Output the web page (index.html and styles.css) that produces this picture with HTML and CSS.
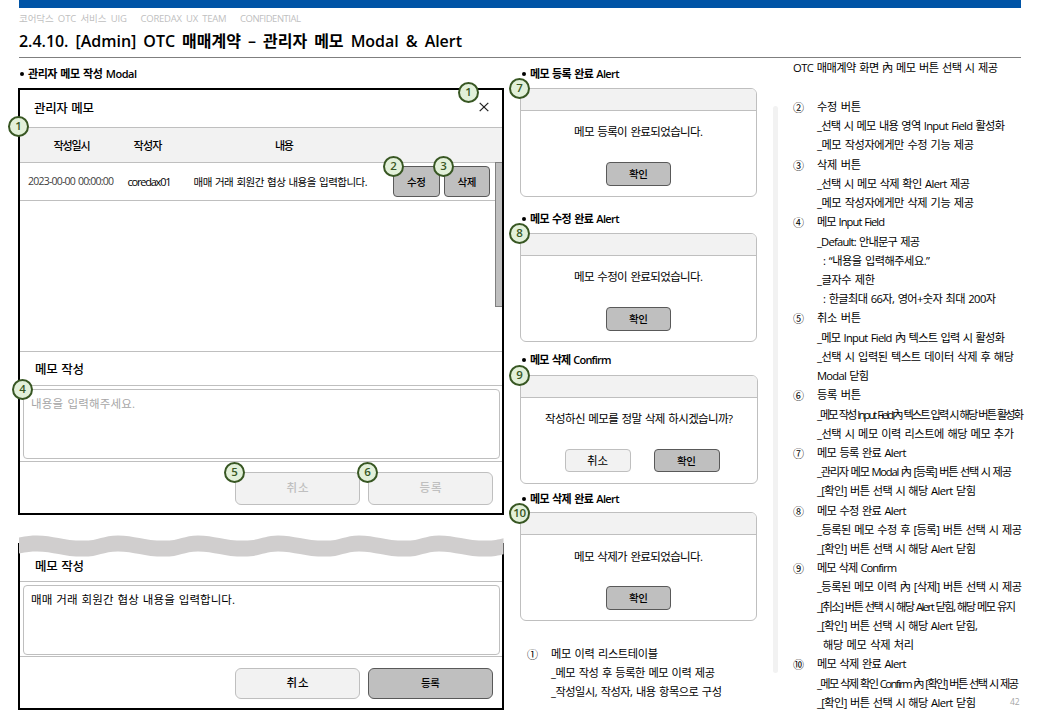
FILE: index.html
```html
<!DOCTYPE html>
<html lang="ko">
<head>
<meta charset="utf-8">
<title>2.4.10. [Admin] OTC 매매계약</title>
<link rel="stylesheet" href="styles.css">
</head>
<body>
<div class="page">
  <header class="head">
    <div class="topbar"></div>
    <div class="caption"><span data-w="107">코어닥스 OTC 서비스 UIG</span><span data-w="85">COREDAX UX TEAM</span><span data-w="60">CONFIDENTIAL</span></div>
    <h1 class="title"><span data-w="442">2.4.10. [Admin] OTC 매매계약 – 관리자 메모 Modal &amp; Alert</span></h1>
  </header>
  <div class="columns">
    <section class="left">
      <h2 class="label"><i class="dot"></i><span data-w="108">관리자 메모 작성 Modal</span></h2>
      <div class="modal">
        <div class="modal-title"><span data-w="59">관리자 메모</span>
          <svg class="close" viewBox="0 0 10 10" width="10" height="10"><path d="M.7 .9 9.3 9.1M9.3 .9 .7 9.1" stroke="#222" stroke-width="1.3" fill="none"/></svg>
        </div>
        <div class="thead"><span data-w="36">작성일시</span><span data-w="28">작성자</span><span data-w="18">내용</span></div>
        <div class="tbody">
          <div class="row">
            <span class="date" data-w="85">2023-00-00 00:00:00</span>
            <span class="author" data-w="43">coredax01</span>
            <span class="memo" data-w="173">매매 거래 회원간 협상 내용을 입력합니다.</span>
            <button class="btn dark edit"><span data-w="18">수정</span></button>
            <button class="btn dark del"><span data-w="18">삭제</span></button>
          </div>
          <div class="scroll"></div>
        </div>
        <div class="write-title"><span data-w="48">메모 작성</span></div>
        <div class="area-wrap"><div class="area hint"><span data-w="103">내용을 입력해주세요.</span></div></div>
        <div class="actions"><button class="btn light off"><span data-w="21">취소</span></button><button class="btn light off"><span data-w="21">등록</span></button></div>
      </div>
      <div class="modal second">
        <svg class="wave" width="485" height="22" viewBox="0 0 485 22">
          <path d="M0 2.5C8 .8 12 .4 18 .4C34 .4 44 5.6 64 5.6C80 5.6 84 .4 99 .4C115 .4 125 5.6 145 5.6C161 5.6 165 .4 179 .4C195 .4 205 5.6 225 5.6C241 5.6 245 .4 259 .4C275 .4 286 5.6 306 5.6C322 5.6 326 .4 340 .4C356 .4 366 5.6 386 5.6C402 5.6 406 .4 420 .4C436 .4 447 5.6 467 5.6C475 5.6 479 4.5 484.500 3.200V19.200C479 20.500 475 21.600 467 21.600C447 21.600 436 16.400 420 16.400C406 16.400 402 21.600 386 21.600C366 21.600 356 16.400 340 16.400C326 16.400 322 21.600 306 21.600C286 21.600 275 16.400 259 16.400C245 16.400 241 21.600 225 21.600C205 21.600 195 16.400 179 16.400C165 16.400 161 21.600 145 21.600C125 21.600 115 16.400 99 16.400C84 16.400 80 21.600 64 21.600C44 21.600 34 16.400 18 16.400C12 16.400 8 16.800 0 18.500Z" fill="#d0cece"/>
        </svg>
        <div class="write-title"><span data-w="48">메모 작성</span></div>
        <div class="area-wrap"><div class="area"><span data-w="203">매매 거래 회원간 협상 내용을 입력합니다.</span></div></div>
        <div class="actions"><button class="btn light"><span data-w="21">취소</span></button><button class="btn dark"><span data-w="18">등록</span></button></div>
      </div>
    </section>

    <section class="mid">
      <h2 class="label"><i class="dot"></i><span data-w="88.5">메모 등록 완료 Alert</span></h2>
      <div class="alert"><div class="alert-head"></div><p><span data-w="128">메모 등록이 완료되었습니다.</span></p><div class="alert-foot"><button class="btn dark"><span data-w="18">확인</span></button></div></div>
      <h2 class="label l2"><i class="dot"></i><span data-w="88.5">메모 수정 완료 Alert</span></h2>
      <div class="alert"><div class="alert-head"></div><p><span data-w="128">메모 수정이 완료되었습니다.</span></p><div class="alert-foot"><button class="btn dark"><span data-w="18">확인</span></button></div></div>
      <h2 class="label l3"><i class="dot"></i><span data-w="80.5">메모 삭제 Confirm</span></h2>
      <div class="alert confirm"><div class="alert-head"></div><p><span data-w="187">작성하신 메모를 정말 삭제 하시겠습니까?</span></p><div class="alert-foot"><button class="btn light"><span data-w="20">취소</span></button><button class="btn dark"><span data-w="18">확인</span></button></div></div>
      <h2 class="label l4"><i class="dot"></i><span data-w="88.5">메모 삭제 완료 Alert</span></h2>
      <div class="alert last"><div class="alert-head"></div><p><span data-w="128">메모 삭제가 완료되었습니다.</span></p><div class="alert-foot"><button class="btn dark"><span data-w="18">확인</span></button></div></div>
      <div class="notes first">
        <b>①</b><span data-w="106">메모 이력 리스트테이블</span>
        <span data-w="163">_메모 작성 후 등록한 메모 이력 제공</span>
        <span data-w="170">_작성일시, 작성자, 내용 항목으로 구성</span>
      </div>
    </section>

    <div class="divider"></div>

    <section class="right">
      <p class="lead"><span data-w="204">OTC 매매계약 화면 內 메모 버튼 선택 시 제공</span></p>
      <div class="notes">
        <b>②</b><span data-w="43">수정 버튼</span>
        <span data-w="187">_선택 시 메모 내용 영역 Input Field 활성화</span>
        <span data-w="156">_메모 작성자에게만 수정 기능 제공</span>
        <b>③</b><span data-w="43">삭제 버튼</span>
        <span data-w="152">_선택 시 메모 삭제 확인 Alert 제공</span>
        <span data-w="156">_메모 작성자에게만 삭제 기능 제공</span>
        <b>④</b><span data-w="67">메모 Input Field</span>
        <span data-w="102">_Default: 안내문구 제공</span>
        <span class="in" data-w="106">: “내용을 입력해주세요.”</span>
        <span data-w="57">_글자수 제한</span>
        <span class="in" data-w="172">: 한글최대 66자, 영어+숫자 최대 200자</span>
        <b>⑤</b><span data-w="43">취소 버튼</span>
        <span data-w="187">_메모 Input Field 內 텍스트 입력 시 활성화</span>
        <span data-w="196">_선택 시 입력된 텍스트 데이터 삭제 후 해당</span>
        <span data-w="51">Modal 닫힘</span>
        <b>⑥</b><span data-w="43">등록 버튼</span>
        <span data-w="206">_메모 작성 Input Field內 텍스트 입력 시 해당 버튼 활성화</span>
        <span data-w="196">_선택 시 메모 이력 리스트에 해당 메모 추가</span>
        <b>⑦</b><span data-w="88.5">메모 등록 완료 Alert</span>
        <span data-w="194">_관리자 메모 Modal 內 [등록] 버튼 선택 시 제공</span>
        <span data-w="158">_[확인] 버튼 선택 시 해당 Alert 닫힘</span>
        <b>⑧</b><span data-w="88.5">메모 수정 완료 Alert</span>
        <span data-w="204">_등록된 메모 수정 후 [등록] 버튼 선택 시 제공</span>
        <span data-w="158">_[확인] 버튼 선택 시 해당 Alert 닫힘</span>
        <b>⑨</b><span data-w="79">메모 삭제 Confirm</span>
        <span data-w="204">_등록된 메모 이력 內 [삭제] 버튼 선택 시 제공</span>
        <span data-w="198">_[취소] 버튼 선택 시 해당 Alert 닫힘, 해당 메모 유지</span>
        <span data-w="160">_[확인] 버튼 선택 시 해당 Alert 닫힘,</span>
        <span class="in" data-w="90">해당 메모 삭제 처리</span>
        <b>⑩</b><span data-w="88.5">메모 삭제 완료 Alert</span>
        <span data-w="201">_메모 삭제 확인 Confirm 內 [확인] 버튼 선택 시 제공</span>
        <span data-w="158">_[확인] 버튼 선택 시 해당 Alert 닫힘</span>
      </div>
    </section>
  </div>
  <i class="badge m1">1</i><i class="badge m1b">1</i><i class="badge m2">2</i><i class="badge m3">3</i><i class="badge m4">4</i>
  <i class="badge m5">5</i><i class="badge m6">6</i><i class="badge m7">7</i><i class="badge m8">8</i><i class="badge m9">9</i><i class="badge m10">10</i>
  <span class="pageno">42</span>
</div>
<script src="fit.js"></script>
</body>
</html>
```
FILE: styles.css
```css
* { box-sizing: border-box; margin: 0; padding: 0; }
body { background: #fff; color: #000; font: 11px "Open Sans", "Noto Sans CJK KR", sans-serif; word-spacing: 1px; }
.page { position: relative; width: 1040px; height: 720px; overflow: hidden; }
[data-w] { display: inline-block; white-space: pre; }

.head { height: 58px; width: 1002px; margin-left: 19px; border-bottom: 1px solid #7f7f7f; }
.topbar { height: 8px; background: #0054a6; }
.caption { display: flex; gap: 13.500px; height: 20px; line-height: 21px; font-size: 9.500px; color: #bfbfbf; word-spacing: 2px; }
.title { font-size: 16px; font-weight: 600; line-height: 26px; height: 26px; word-spacing: 3px; }

.columns { display: flex; height: 662px; padding-left: 18px; }
.left { width: 486px; }
.mid { width: 238px; margin-left: 16px; }
.divider { width: 5px; height: 567px; margin: 48px 0 0 15px; border-radius: 3px; background: #f2f2f2; }
.right { width: 247px; margin-left: 15px; }

.label { display: flex; align-items: center; gap: 4px; height: 30px; padding: 0 0 0 2px; font-size: 11px; font-weight: 600; }
.dot { width: 4px; height: 4px; margin-top: 1px; border-radius: 50%; background: #000; }

.modal { width: 486px; height: 427px; border: 2px solid #000; background: #fff; }
.modal-title { display: flex; justify-content: space-between; align-items: center; height: 38px; padding: 0 13px 3px 14px; font-size: 12.500px; font-weight: 500; border-bottom: 1px solid #bfbfbf; }
.thead { display: grid; grid-template-columns: 104px 48px 225px; align-items: center; justify-items: center; height: 35px; background: #f2f2f2; border-bottom: 1px solid #bfbfbf; font-weight: 500; font-size: 11px; }
.tbody { display: flex; height: 189px; border-bottom: 1px solid #bfbfbf; }
.row { display: flex; align-items: center; width: 475px; height: 38px; padding-left: 8px; border-bottom: 1px solid #bfbfbf; }
.row > span { margin-top: -1px; }
.date { color: #404040; font-size: 10.500px; }
.author { margin-left: 13.500px; }
.memo { margin-left: 22px; font-size: 10.500px; }
.scroll { width: 7px; height: 145px; margin-top: -1px; background: #bfbfbf; border: 1px solid #7f7f7f; border-right: 0; }
.write-title { height: 34px; line-height: 35px; padding-left: 15px; font-size: 12.500px; font-weight: 500; border-bottom: 1px solid #bfbfbf; }
.area-wrap { height: 76px; padding: 3px 2px 0 3px; border-bottom: 1px solid #bfbfbf; }
.area { height: 70px; padding: 3px 7px; line-height: 22px; font-size: 11.500px; border: 1px solid #bfbfbf; border-radius: 4px; }
.hint { color: #a6a6a6; }
.actions { display: flex; justify-content: flex-end; gap: 8px; padding: 10px 9px 0 0; }
.actions .btn { width: 125px; height: 33px; padding-bottom: 2px; border-radius: 6px; }

.btn { display: flex; align-items: center; justify-content: center; padding-bottom: 1px; border-radius: 4px; font: inherit; color: #000; }
.dark { background: #bfbfbf; border: 1px solid #595959; font-size: 10.500px; font-weight: 500; }
.light { background: #f2f2f2; border: 1px solid #bfbfbf; font-size: 11.500px; }
.actions .light { font-weight: 500; padding-bottom: 4px; }
.actions .off { color: #bfbfbf; }
.edit { flex: none; width: 47px; height: 31px; margin-left: auto; }
.del { flex: none; width: 46px; height: 31px; margin: 0 5px 0 4px; }

.second { position: relative; height: 167px; margin-top: 28px; }
.second .write-title { height: 37px; line-height: 43px; }
.second .area-wrap { height: 75px; }
.second .actions { padding-top: 11px; }
.second .actions .btn { height: 31px; }
.wave { position: absolute; left: -1px; top: -10px; }

.alert { width: 237px; height: 109px; border: 1px solid #bfbfbf; border-radius: 6px; overflow: hidden; }
.alert-head { height: 22px; background: #f2f2f2; border-bottom: 1px solid #bfbfbf; }
.alert p { height: 51px; line-height: 42px; text-align: center; font-size: 11.500px; }
.alert-foot { display: flex; justify-content: center; gap: 23px; }
.alert-foot .btn { width: 65px; height: 24px; }
.last p { line-height: 43px; }
.confirm { width: 238px; }
.confirm .alert-foot { padding-left: 6px; }
.confirm .alert-foot .btn { width: 66px; height: 23px; }
.l2 { margin-top: 6px; }
.l3 { margin-top: 1px; height: 32px; }
.l4 { height: 28px; }

.notes { display: grid; grid-template-columns: 24px 1fr; grid-auto-rows: 19.220px; line-height: 19.220px; font-size: 11.200px; }
.notes b { font: 11px/20px "Noto Sans CJK KR", sans-serif; }
.notes span { grid-column: 2; justify-self: start; }
.notes .in { margin-left: 6px; }
.first { margin: 23px 0 0 7px; }
.lead { height: 39px; line-height: 20px; font-size: 11.200px; }

.badge { position: absolute; width: 21px; height: 21px; border: 2px solid #385723; border-radius: 50%; background: #e2f0d9; color: #385723; font: 600 11.500px/16px "Open Sans", sans-serif; text-align: center; }
.m1 { left: 8px; top: 116px; }
.m1b { left: 458px; top: 82px; }
.m2 { left: 383px; top: 156px; }
.m3 { left: 433px; top: 156px; }
.m4 { left: 12px; top: 379px; }
.m5 { left: 224px; top: 462px; }
.m6 { left: 357px; top: 462px; }
.m7 { left: 509px; top: 78px; }
.m8 { left: 509px; top: 223px; }
.m9 { left: 509px; top: 365px; }
.m10 { left: 509px; top: 503px; letter-spacing: -.4px; }
.pageno { position: absolute; left: 1010px; top: 696px; font-size: 8.500px; line-height: 12px; color: #a6a6a6; }
```
FILE: fit.js
```js
// Tracks each label so that it spans the width given in data-w.
document.querySelectorAll('[data-w]').forEach(function (el) {
  var gaps = Array.from(el.textContent).length - 1;
  var step = (parseFloat(el.dataset.w) + 1 - el.getBoundingClientRect().width) / gaps;
  el.style.letterSpacing = step + 'px';
  el.style.marginRight = -step + 'px';
});
```
